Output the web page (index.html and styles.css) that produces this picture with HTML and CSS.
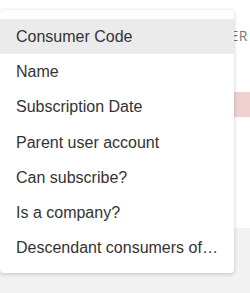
FILE: index.html
```html
<!DOCTYPE html>
<html lang="en">
<head>
  <meta charset="UTF-8">
  <title>Column picker</title>
  <link rel="stylesheet" href="styles.css">
</head>
<body>
  <div class="card">
    <div class="toolbar">
      <span class="title">CONSUMER</span>
    </div>
    <div class="row-selected"></div>
  </div>

  <ul class="menu">
    <li class="menu-item active">Consumer Code</li>
    <li class="menu-item">Name</li>
    <li class="menu-item">Subscription Date</li>
    <li class="menu-item">Parent user account</li>
    <li class="menu-item">Can subscribe?</li>
    <li class="menu-item">Is a company?</li>
    <li class="menu-item">Descendant consumers of…</li>
  </ul>
</body>
</html>
```

FILE: styles.css
```css
body {
  margin: 0;
  background-color: #f2f2f2;
  font-family: "Liberation Sans", Arial, sans-serif;
}
.card {
  height: 228px;
  background-color: #fff;
}
.toolbar {
  display: flex;
  justify-content: flex-end;
  padding: 28px 2px 0 0;
}
.title {
  font-family: "Open Sans", sans-serif;
  font-size: 14px;
  line-height: 16px;
  color: #777;
  letter-spacing: 0.5px;
}
.row-selected {
  margin-top: 48px;
  height: 25px;
  background-color: #efd1cf;
}
.menu {
  position: absolute;
  left: 0;
  top: 10px;
  width: 234px;
  margin: 0;
  padding: 9px 0 8px;
  list-style: none;
  background-color: #fff;
  border-radius: 4px;
  box-shadow: 0 1px 4px rgba(0, 0, 0, 0.2);
}
.menu-item {
  height: 35.2px;
  line-height: 35.2px;
  padding: 0 16px;
  font-size: 16px;
  color: #333;
  white-space: nowrap;
  overflow: hidden;
  text-overflow: ellipsis;
}
.menu-item.active {
  background-color: #ebebeb;
}
```
